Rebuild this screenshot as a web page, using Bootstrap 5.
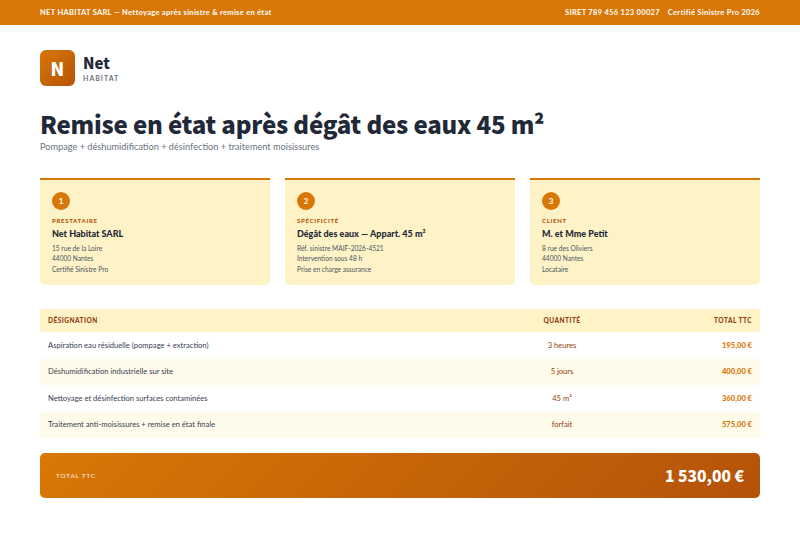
<!DOCTYPE html>
<html lang="fr">
<head>
    <meta charset="UTF-8">
    <meta name="viewport" content="width=device-width, initial-scale=1.0">
    <title>Remise en état</title>
    <link href="https://cdn.jsdelivr.net/npm/bootstrap@5.3.0/dist/css/bootstrap.min.css" rel="stylesheet">
    <style>
        body {
            font-family: Lato, "Noto Sans", sans-serif;
            color: #1f2937;
            background: #fff;
        }
        .heavy-text {
            font-family: "Noto Sans CJK SC", "Noto Sans", sans-serif;
            font-weight: 900;
        }
        .top-strip {
            background: #d97706;
            color: #fff;
            height: 25px;
            padding: 0 40px;
            font-size: 7.5px;
            font-weight: 700;
            letter-spacing: .3px;
        }
        .page-body {
            padding: 25px 40px 0;
        }
        .logo-box {
            width: 35px;
            height: 36px;
            border-radius: 6px;
            background: linear-gradient(135deg, #d97706, #b45309);
            color: #fff;
            font-size: 18px;
        }
        .logo-name {
            font-size: 15px;
            line-height: 20px;
        }
        .logo-sub {
            font-size: 7px;
            font-weight: 700;
            letter-spacing: 1px;
            color: #6b7280;
            line-height: 10px;
        }
        .main-title {
            font-size: 24px;
            line-height: 30px;
            letter-spacing: -.2px;
            margin: 23px 0 0;
        }
        .main-sub {
            font-size: 9.2px;
            color: #6b7280;
            line-height: 14px;
            margin: 1px 0 0;
        }
        .info-grid {
            margin-top: 24px;
            display: grid;
            grid-template-columns: repeat(3, 1fr);
            gap: 15px;
        }
        .info-box {
            background: #fef3c7;
            border-top: 2px solid #d97706;
            border-radius: 0 0 5px 5px;
            padding: 12px;
            height: 107px;
        }
        .step-dot {
            width: 18px;
            height: 18px;
            background: #d97706;
            color: #fff;
            font-size: 8px;
            font-weight: 700;
        }
        .box-label {
            font-size: 6px;
            font-weight: 900;
            letter-spacing: .7px;
            color: #b45309;
            margin-top: 6px;
            line-height: 9px;
        }
        .box-name {
            font-size: 9px;
            font-weight: 900;
            margin-top: 3px;
            line-height: 12px;
        }
        .box-line {
            font-size: 6.6px;
            color: #4b5563;
            line-height: 10.3px;
        }
        .box-lines {
            margin-top: 3px;
        }
        .work-table {
            margin: 24px 0 0;
            font-size: 7.6px;
            table-layout: fixed;
        }
        .work-table th {
            background: #fef3c7;
            color: #92400e;
            font-size: 6.5px;
            font-weight: 900;
            letter-spacing: .5px;
            padding: 0 8px;
            height: 23px;
            vertical-align: middle;
            border: 0;
        }
        .work-table td {
            height: 26.5px;
            padding: 0 8px;
            vertical-align: middle;
            border: 0;
            color: #374151;
            background: transparent;
        }
        .work-table tbody tr:nth-child(even) td {
            background: #fffbeb;
        }
        .work-table td.qty-cell {
            color: #92400e;
        }
        .work-table td.price-cell {
            color: #d97706;
            font-weight: 900;
        }
        .total-band {
            margin-top: 15px;
            height: 45px;
            border-radius: 5px;
            padding: 0 16px;
            color: #fff;
            background: linear-gradient(135deg, #d97706, #b45309);
        }
        .total-label {
            font-size: 6.5px;
            letter-spacing: .8px;
            opacity: .9;
        }
        .total-value {
            font-size: 15.6px;
        }
    </style>
</head>
<body>
    <div class="top-strip d-flex justify-content-between align-items-center">
        <span>NET HABITAT SARL — Nettoyage après sinistre &amp; remise en état</span>
        <span class="d-flex gap-2">
            <span>SIRET 789 456 123 00027</span>
            <span>Certifié Sinistre Pro 2026</span>
        </span>
    </div>

    <div class="page-body">
        <div class="d-flex align-items-center gap-2">
            <div class="logo-box heavy-text d-flex align-items-center justify-content-center">N</div>
            <div>
                <div class="logo-name heavy-text">Net</div>
                <div class="logo-sub">HABITAT</div>
            </div>
        </div>

        <h1 class="main-title heavy-text">Remise en état après dégât des eaux 45 m²</h1>
        <p class="main-sub">Pompage + déshumidification + désinfection + traitement moisissures</p>

        <div class="info-grid">
            <div class="info-box">
                <div class="step-dot rounded-circle d-flex align-items-center justify-content-center">1</div>
                <div class="box-label">PRESTATAIRE</div>
                <div class="box-name">Net Habitat SARL</div>
                <div class="box-lines">
                    <div class="box-line">15 rue de la Loire</div>
                    <div class="box-line">44000 Nantes</div>
                    <div class="box-line">Certifié Sinistre Pro</div>
                </div>
            </div>
            <div class="info-box">
                <div class="step-dot rounded-circle d-flex align-items-center justify-content-center">2</div>
                <div class="box-label">SPÉCIFICITÉ</div>
                <div class="box-name">Dégât des eaux — Appart. 45 m²</div>
                <div class="box-lines">
                    <div class="box-line">Réf. sinistre MAIF-2026-4521</div>
                    <div class="box-line">Intervention sous 48 h</div>
                    <div class="box-line">Prise en charge assurance</div>
                </div>
            </div>
            <div class="info-box">
                <div class="step-dot rounded-circle d-flex align-items-center justify-content-center">3</div>
                <div class="box-label">CLIENT</div>
                <div class="box-name">M. et Mme Petit</div>
                <div class="box-lines">
                    <div class="box-line">8 rue des Oliviers</div>
                    <div class="box-line">44000 Nantes</div>
                    <div class="box-line">Locataire</div>
                </div>
            </div>
        </div>

        <table class="table work-table">
            <colgroup>
                <col style="width: 60%">
                <col style="width: 25%">
                <col style="width: 15%">
            </colgroup>
            <thead>
                <tr>
                    <th>DÉSIGNATION</th>
                    <th class="text-center">QUANTITÉ</th>
                    <th class="text-end">TOTAL TTC</th>
                </tr>
            </thead>
            <tbody>
                <tr><td>Aspiration eau résiduelle (pompage + extraction)</td><td class="qty-cell text-center">3 heures</td><td class="price-cell text-end">195,00 €</td></tr>
                <tr><td>Déshumidification industrielle sur site</td><td class="qty-cell text-center">5 jours</td><td class="price-cell text-end">400,00 €</td></tr>
                <tr><td>Nettoyage et désinfection surfaces contaminées</td><td class="qty-cell text-center">45 m²</td><td class="price-cell text-end">360,00 €</td></tr>
                <tr><td>Traitement anti-moisissures + remise en état finale</td><td class="qty-cell text-center">forfait</td><td class="price-cell text-end">575,00 €</td></tr>
            </tbody>
        </table>

        <div class="total-band d-flex justify-content-between align-items-center">
            <span class="total-label">TOTAL TTC</span>
            <span class="total-value heavy-text">1 530,00 €</span>
        </div>
    </div>
    <script src="https://cdn.jsdelivr.net/npm/bootstrap@5.3.0/dist/js/bootstrap.bundle.min.js"></script>
</body>
</html>
